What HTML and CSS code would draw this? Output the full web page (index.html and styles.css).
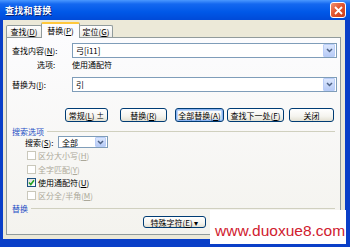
FILE: index.html
```html
<!DOCTYPE html>
<html>
<head>
<meta charset="utf-8">
<link rel="stylesheet" href="styles.css">
</head>
<body>
<div class="window">
  <div class="titlebar">
    <span class="title">查找和替换</span>
    <span class="close"><svg width="9" height="9" viewBox="0 0 9 9"><path d="M1 1L8 8M8 1L1 8" stroke="#fff" stroke-width="1.8"/></svg></span>
  </div>
  <div class="client">
    <div class="tabs">
      <div class="tab t1">查找(<u>D</u>)</div>
      <div class="tab t2 active">替换(<u>P</u>)</div>
      <div class="tab t3">定位(<u>G</u>)</div>
    </div>
    <div class="panel">
      <div class="row combo-row r1">
        <span class="lbl">查找内容(<u>N</u>):</span>
        <div class="combo"><span class="val">弓[i11]</span><span class="drop"><svg width="7" height="5" viewBox="0 0 7 5"><path d="M1 1L3.5 3.5L6 1" fill="none" stroke="#4d6185" stroke-width="1.5"/></svg></span></div>
      </div>
      <div class="row opts">
        <span class="lbl opt-lbl">选项:</span>
        <span>使用通配符</span>
      </div>
      <div class="row combo-row r2">
        <span class="lbl">替换为(<u>I</u>):</span>
        <div class="combo"><span class="val">引</span><span class="drop"><svg width="7" height="5" viewBox="0 0 7 5"><path d="M1 1L3.5 3.5L6 1" fill="none" stroke="#4d6185" stroke-width="1.5"/></svg></span></div>
      </div>
      <div class="row buttons">
        <span class="btn b1">常规(<u>L</u>) ±</span>
        <span class="btn b2">替换(<u>R</u>)</span>
        <span class="btn b3 focus">全部替换(<u>A</u>)</span>
        <span class="btn b4">查找下一处(<u>F</u>)</span>
        <span class="btn b5">关闭</span>
      </div>
      <div class="row group g1"><span class="glbl">搜索选项</span><span class="gline"></span></div>
      <div class="row search">
        <span class="slbl">搜索(<u>S</u>):</span>
        <div class="select"><span class="val">全部</span><span class="drop"><svg width="7" height="5" viewBox="0 0 7 5"><path d="M1 1L3.5 3.5L6 1" fill="none" stroke="#4d6185" stroke-width="1.5"/></svg></span></div>
      </div>
      <div class="row chk c1 disabled"><span class="box"></span>区分大小写(<u>H</u>)</div>
      <div class="row chk c2 disabled"><span class="box"></span>全字匹配(<u>Y</u>)</div>
      <div class="row chk c3"><span class="box"><svg width="7" height="7" viewBox="0 0 7 7"><path d="M1 3.5L2.8 5.5L6 1.2" fill="none" stroke="#21a121" stroke-width="1.5"/></svg></span>使用通配符(<u>U</u>)</div>
      <div class="row chk c4 disabled"><span class="box"></span>区分全/半角(<u>M</u>)</div>
      <div class="row group g2"><span class="glbl">替换</span><span class="gline"></span></div>
      <div class="row special">
        <span class="btn sbtn">特殊字符(<u>E</u>) ▾</span>
      </div>
    </div>
  </div>
  <div class="watermark">www.duoxue8.com</div>
</div>
</body>
</html>
```
FILE: styles.css
```css
html, body {
  margin: 0;
  padding: 0;
}
body {
  width: 350px;
  height: 247px;
  overflow: hidden;
  font-family: "Noto Sans CJK SC", "Liberation Sans", sans-serif;
  font-size: 8px;
  color: #000;
  white-space: nowrap;
}
u { text-decoration: underline; }
.window {
  position: relative;
  width: 350px;
  height: 247px;
  background: #0a3fc8;
  box-sizing: border-box;
}
.titlebar {
  height: 20px;
  background: linear-gradient(#4a98ff 0%, #1468f0 20%, #0058e8 60%, #004ad8 100%);
  display: flex;
  align-items: center;
  justify-content: space-between;
  padding: 0 4px 0 5px;
  box-sizing: border-box;
}
.title {
  color: #fff;
  font-weight: bold;
  font-size: 9px;
  letter-spacing: 0.3px;
  text-shadow: 1px 1px 0 #0a1e70;
}
.close {
  width: 14px;
  height: 14px;
  border: 1px solid #fff;
  border-radius: 3px;
  background: linear-gradient(135deg, #f09070 0%, #e0522c 50%, #c8401e 100%);
  display: flex;
  align-items: center;
  justify-content: center;
}
.client {
  margin-left: 3px;
  width: 342px;
  height: 219px;
  background: #ece9d8;
  display: flex;
  flex-direction: column;
}
.tabs {
  display: flex;
  height: 17px;
  padding-left: 3px;
  align-items: flex-end;
}
.tab {
  height: 12px;
  line-height: 11px;
  border: 1px solid #919b9c;
  border-bottom: none;
  border-radius: 2px 2px 0 0;
  background: linear-gradient(#fefefe, #ecebe6);
  box-sizing: border-box;
  margin-right: -1px;
  text-align: center;
}
.t1 { width: 36px; }
.t2 { width: 39px; }
.t3 { width: 34px; }
.tab.active {
  height: 16px;
  line-height: 13px;
  background: #fcfcfe;
  border-top: 2px solid #ffc83c;
  position: relative;
  z-index: 2;
  margin-bottom: -1px;
}
.panel {
  margin-left: 3px;
  width: 335px;
  height: 198px;
  border: 1px solid #919b9c;
  box-sizing: border-box;
  background: linear-gradient(#fcfcfe, #f4f3ee);
  display: flex;
  flex-direction: column;
}
.row {
  display: flex;
  align-items: center;
  flex-shrink: 0;
}
.lbl {
  width: 60px;
  padding-left: 5px;
}
.combo-row.r1 { margin-top: 5px; height: 15px; }
.combo-row.r2 { margin-top: 7px; height: 15px; }
.combo {
  width: 265px;
  height: 15px;
  box-sizing: border-box;
  border: 1px solid #7f9db9;
  background: #fff;
  display: flex;
  align-items: center;
  justify-content: space-between;
  padding-left: 3px;
}
.drop {
  width: 10px;
  height: 11px;
  margin-right: 1px;
  border: 1px solid #b9cdf8;
  border-radius: 1px;
  background: linear-gradient(#dbe6fd, #b7cbf6);
  display: flex;
  align-items: center;
  justify-content: center;
  box-sizing: content-box;
}
.opts { height: 12px; }
.opt-lbl { padding-left: 30px; width: 35px; }
.buttons { margin-top: 16px; height: 14px; }
.btn {
  height: 14px;
  box-sizing: border-box;
  border: 1px solid #003c74;
  border-radius: 3px;
  background: linear-gradient(#ffffff 0%, #f5f4ef 60%, #e3e0d2 100%);
  display: flex;
  align-items: center;
  justify-content: center;
  white-space: nowrap;
}
.b1 { margin-left: 58px; width: 43px; }
.b2 { margin-left: 12px; width: 47px; }
.b3 { margin-left: 8px; width: 49px; }
.b4 { margin-left: 3px; width: 57px; }
.b5 { margin-left: 5px; width: 45px; }
.btn.focus {
  box-shadow: inset 0 0 0 1px #8cb4f2, inset 0 0 0 2px #bcd4f6;
}
.group { height: 10px; margin-top: 4px; }
.glbl {
  color: #1d4fc5;
  padding-left: 5px;
  padding-right: 3px;
}
.gline {
  flex: 1;
  height: 1px;
  background: #d0d0bf;
  margin-right: 5px;
}
.search { height: 12px; }
.slbl { padding-left: 18px; width: 33px; }
.select {
  width: 50px;
  height: 12px;
  box-sizing: border-box;
  border: 1px solid #7f9db9;
  background: #fff;
  display: flex;
  align-items: center;
  justify-content: space-between;
  padding-left: 3px;
}
.select .drop { height: 8px; width: 9px; }
.chk { height: 13px; padding-left: 20px; }
.c1 { margin-top: 1px; }
.c2 { height: 14px; }
.box {
  width: 9px;
  height: 9px;
  box-sizing: border-box;
  border: 1px solid #1c5180;
  background: linear-gradient(135deg, #dcdcd7, #ffffff);
  margin-right: 2px;
  display: flex;
  align-items: center;
  justify-content: center;
}
.disabled { color: #aca899; }
.disabled .box { border-color: #cac8bb; background: #fff; }
.g2 { margin-top: 1px; }
.special { margin-top: 3px; height: 12px; }
.sbtn { margin-left: 136px; width: 63px; height: 12px; }
.watermark {
  position: absolute;
  left: 210px;
  top: 210px;
  width: 136px;
  height: 34px;
  background: #fff;
  color: #d0202e;
  font-family: "Liberation Sans", sans-serif;
  font-size: 15.5px;
  line-height: 34px;
  padding-left: 5px;
  box-sizing: border-box;
  padding-top: 4px;
}
```
